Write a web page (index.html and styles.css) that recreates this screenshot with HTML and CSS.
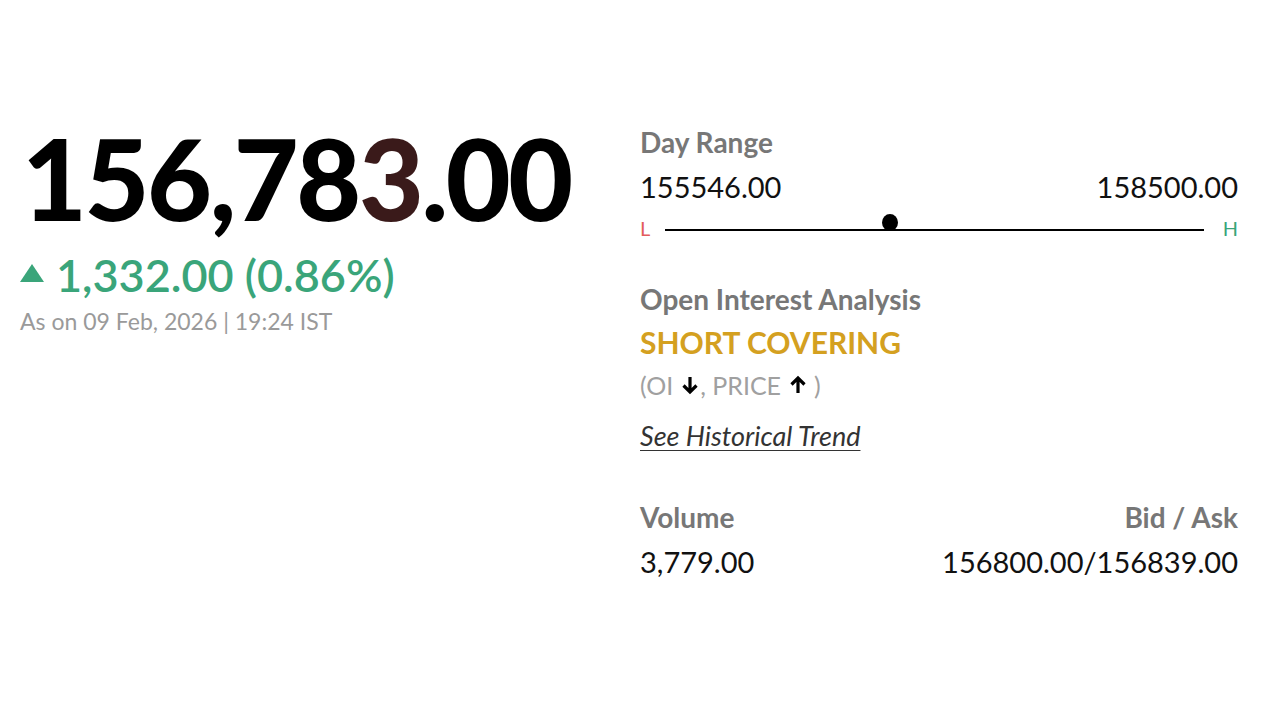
FILE: index.html
```html
<!DOCTYPE html>
<html>
<head>
<meta charset="utf-8">
<link rel="stylesheet" href="styles.css">
</head>
<body>
<main class="quote">
  <section class="left">
    <div class="price">156,78<span class="flash">3</span>.00</div>
    <div class="change"><span class="tri"></span>1,332.00 (0.86%)</div>
    <div class="asof">As on 09 Feb, 2026 | 19:24 IST</div>
  </section>
  <section class="right">
    <div class="block">
      <div class="label">Day Range</div>
      <div class="row values"><span>155546.00</span><span>158500.00</span></div>
      <div class="range">
        <span class="lo">L</span>
        <div class="track"><span class="dot" style="left: 41.7%"></span></div>
        <span class="hi">H</span>
      </div>
    </div>
    <div class="block oi">
      <div class="label">Open Interest Analysis</div>
      <div class="signal">SHORT COVERING</div>
      <div class="note">(OI<svg class="arr" viewBox="0 0 18 20" width="18" height="20"><path d="M9 2v15M2.5 10.5L9 17l6.5-6.5" fill="none" stroke="#000" stroke-width="3.2"/></svg>, PRICE<svg class="arr last" viewBox="0 0 18 20" width="18" height="20"><path d="M9 18V3M2.5 9.5L9 3l6.5 6.5" fill="none" stroke="#000" stroke-width="3.2"/></svg>)</div>
      <a class="trend" href="#">See Historical Trend</a>
    </div>
    <div class="block vol">
      <div class="row label"><span>Volume</span><span>Bid / Ask</span></div>
      <div class="row values"><span>3,779.00</span><span>156800.00/156839.00</span></div>
    </div>
  </section>
</main>
</body>
</html>
```
FILE: styles.css
```css
html, body {
  margin: 0;
  padding: 0;
  background: #fff;
}
body {
  font-family: Lato, "Open Sans", sans-serif;
  color: #000;
}
.quote {
  display: flex;
  padding: 122px 42px 0 20px;
}
.left {
  width: 620px;
}
.price {
  font-size: 112px;
  font-weight: 900;
  line-height: 112px;
  letter-spacing: -2.4px;
  margin-left: 2px;
  color: #000;
}
.flash {
  color: #3a1a1a;
}
.change {
  display: flex;
  align-items: center;
  font-size: 45px;
  font-weight: 600;
  color: #3aa57a;
  line-height: 50px;
  margin-top: 16px;
}
.tri {
  width: 0;
  height: 0;
  border-left: 12px solid transparent;
  border-right: 12px solid transparent;
  border-bottom: 18px solid #3aa57a;
  margin: 0 12px 4px 0;
}
.asof {
  font-size: 23px;
  color: #9a9a9a;
  line-height: 28px;
  margin-top: 7px;
}
.right {
  flex: 1;
  display: flex;
  flex-direction: column;
  padding-top: 3px;
}
.row {
  display: flex;
  justify-content: space-between;
}
.label {
  font-size: 28px;
  font-weight: 700;
  color: #777;
  line-height: 34px;
}
.values {
  font-size: 29px;
  color: #111;
  line-height: 34px;
  margin-top: 11px;
}
.range {
  display: flex;
  align-items: center;
  margin-top: 12px;
  height: 24px;
}
.lo, .hi {
  font-size: 20px;
  line-height: 24px;
  width: 25px;
}
.lo { color: #e35c5c; }
.hi { color: #3aa57a; text-align: right; width: 34px; }
.track {
  flex: 1;
  height: 2px;
  background: #000;
  position: relative;
  margin-top: 3px;
}
.dot {
  position: absolute;
  top: -15px;
  width: 16px;
  height: 17px;
  margin-left: -8px;
  border-radius: 50%;
  background: #000;
}
.oi {
  margin-top: 42px;
}
.signal {
  font-size: 30px;
  font-weight: 700;
  color: #d4a020;
  line-height: 38px;
  margin-top: 7px;
}
.note {
  font-size: 25px;
  color: #a0a0a0;
  line-height: 34px;
  margin-top: 7px;
  display: flex;
  align-items: center;
}
.arr {
  margin: 0 1px 0 8px;
}
.arr.last {
  margin: 0 7px 0 8px;
}
.trend {
  display: inline-block;
  font-size: 27px;
  font-style: italic;
  color: #333;
  text-decoration: underline;
  text-decoration-thickness: 1px;
  text-underline-offset: 4px;
  line-height: 34px;
  margin-top: 17px;
}
.vol {
  margin-top: 47px;
}
.vol .values {
  margin-top: 11px;
}
```
